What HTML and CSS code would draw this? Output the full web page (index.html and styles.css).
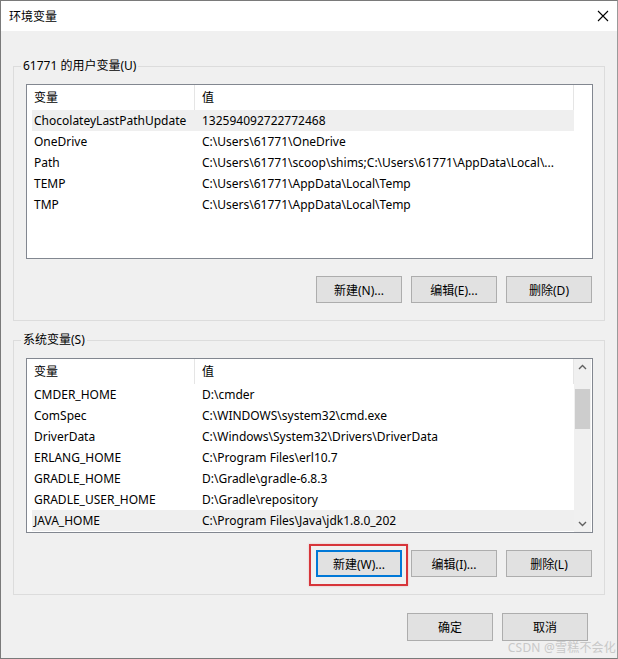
FILE: index.html
```html
<!DOCTYPE html>
<html lang="zh-CN">
<head>
<meta charset="utf-8">
<title>环境变量</title>
<link rel="stylesheet" href="styles.css">
</head>
<body>
<div class="window">
  <div class="titlebar">
    <span class="title">环境变量</span>
    <svg class="close" width="12" height="12" viewBox="0 0 12 12"><path d="M1 1L11 11M11 1L1 11" stroke="#000" stroke-width="1.1" fill="none"/></svg>
  </div>
  <div class="content">
    <fieldset class="group">
      <legend>61771 的用户变量(U)</legend>
      <div class="listbox">
        <div class="list">
          <div class="row head"><span class="c1">变量</span><span class="c2">值</span></div>
          <div class="row sel"><span class="c1">ChocolateyLastPathUpdate</span><span class="c2">132594092722772468</span></div>
          <div class="row"><span class="c1">OneDrive</span><span class="c2">C:\Users\61771\OneDrive</span></div>
          <div class="row"><span class="c1">Path</span><span class="c2">C:\Users\61771\scoop\shims;C:\Users\61771\AppData\Local\...</span></div>
          <div class="row"><span class="c1">TEMP</span><span class="c2">C:\Users\61771\AppData\Local\Temp</span></div>
          <div class="row"><span class="c1">TMP</span><span class="c2">C:\Users\61771\AppData\Local\Temp</span></div>
        </div>
      </div>
      <div class="buttons">
        <button class="btn">新建(N)...</button>
        <button class="btn">编辑(E)...</button>
        <button class="btn">删除(D)</button>
      </div>
    </fieldset>
    <fieldset class="group second">
      <legend>系统变量(S)</legend>
      <div class="listbox">
        <div class="list">
          <div class="row head"><span class="c1">变量</span><span class="c2">值</span></div>
          <div class="row"><span class="c1">CMDER_HOME</span><span class="c2">D:\cmder</span></div>
          <div class="row"><span class="c1">ComSpec</span><span class="c2">C:\WINDOWS\system32\cmd.exe</span></div>
          <div class="row"><span class="c1">DriverData</span><span class="c2">C:\Windows\System32\Drivers\DriverData</span></div>
          <div class="row"><span class="c1">ERLANG_HOME</span><span class="c2">C:\Program Files\erl10.7</span></div>
          <div class="row"><span class="c1">GRADLE_HOME</span><span class="c2">D:\Gradle\gradle-6.8.3</span></div>
          <div class="row"><span class="c1">GRADLE_USER_HOME</span><span class="c2">D:\Gradle\repository</span></div>
          <div class="row sel"><span class="c1">JAVA_HOME</span><span class="c2">C:\Program Files\Java\jdk1.8.0_202</span></div>
        </div>
        <div class="scrollbar">
          <svg class="arrow" width="17" height="17" viewBox="0 0 17 17"><path d="M5 10L8.5 6.5L12 10" stroke="#606060" stroke-width="1.4" fill="none"/></svg>
          <div class="track"><div class="thumb"></div></div>
          <svg class="arrow" width="17" height="17" viewBox="0 0 17 17"><path d="M5 7L8.5 10.5L12 7" stroke="#606060" stroke-width="1.4" fill="none"/></svg>
        </div>
      </div>
      <div class="buttons">
        <span class="highlight"><button class="btn focus">新建(W)...</button></span>
        <button class="btn">编辑(I)...</button>
        <button class="btn">删除(L)</button>
      </div>
    </fieldset>
    <div class="footer">
      <button class="btn big">确定</button>
      <button class="btn big">取消</button>
    </div>
  </div>
  <div class="watermark">CSDN @雪糕不会化</div>
</div>
</body>
</html>
```
FILE: styles.css
```css
* { box-sizing: border-box; }
html, body { margin: 0; padding: 0; background: #f0f0f0; }
body {
  font-family: "Segoe UI", "Noto Sans", "Noto Sans CJK SC", sans-serif;
  font-size: 12px;
  color: #000;
}
.window {
  position: relative;
  width: 618px;
  height: 659px;
  border: 1px solid #7a7a7a;
  border-right-color: #9a9a9a;
  background: #f0f0f0;
  overflow: hidden;
}
.titlebar {
  height: 30px;
  background: #fff;
  display: flex;
  align-items: center;
  justify-content: space-between;
  padding: 0 8px 0 8px;
}
.title { font-size: 12px; }
.close { display: block; }
.content {
  padding: 27px 12px 0 12px;
}
.group {
  margin: 0;
  border: 1px solid #dcdcdc;
  padding: 10px 11px 17px 12px;
  min-width: 0;
}
.group.second { margin-top: 11px; }
legend {
  padding: 0 2px;
  margin-left: -5px;
  line-height: 16px;
}
.listbox {
  height: 175px;
  border: 1px solid #828790;
  background: #fff;
  display: flex;
  padding-right: 1px;
}
.list { width: 547px; }
.row {
  display: flex;
  height: 21px;
  line-height: 21px;
  margin-left: 5px;
  white-space: nowrap;
}
.row.head {
  height: 25px;
  line-height: 25px;
  margin-left: 0;
}
.row.sel { background: #efefef; }
.c1 { width: 163px; padding-left: 2px; overflow: hidden; }
.c2 { flex: 1; padding-left: 7px; overflow: hidden; }
.head .c1 { width: 168px; padding-left: 7px; border-right: 1px solid #e5e5e5; }
.head .c2 { border-right: 1px solid #e5e5e5; }
.scrollbar {
  width: 17px;
  margin-left: auto;
  background: #f0f0f0;
  display: flex;
  flex-direction: column;
}
.arrow { display: block; }
.track { flex: 1; padding-top: 13px; }
.thumb { height: 40px; margin: 0 1px; background: #cdcdcd; }
.buttons {
  display: flex;
  justify-content: flex-end;
  align-items: center;
  gap: 9px;
  margin-top: 17px;
  padding-right: 1px;
}
.btn {
  width: 86px;
  height: 27px;
  background: #e1e1e1;
  border: 1px solid #adadad;
  font-family: inherit;
  font-size: 12px;
  color: #000;
  padding: 0;
  margin: 0;
}
.btn.focus {
  display: block;
  border: 2px solid #0078d7;
}
.highlight {
  position: relative;
  display: block;
}
.highlight::after {
  content: "";
  position: absolute;
  left: -7px;
  right: -6px;
  top: -6px;
  bottom: -9px;
  border: 2px solid #d7353a;
  box-shadow: 0 0 2px rgba(215, 53, 58, 0.3);
  pointer-events: none;
}
.footer {
  display: flex;
  justify-content: flex-end;
  gap: 9px;
  margin-top: 18px;
  padding-right: 17px;
}
.btn.big { height: 28px; }
.watermark {
  position: absolute;
  right: 1px;
  bottom: 2px;
  color: #c8c8c8;
  font-size: 12px;
  letter-spacing: 0.2px;
}
```
